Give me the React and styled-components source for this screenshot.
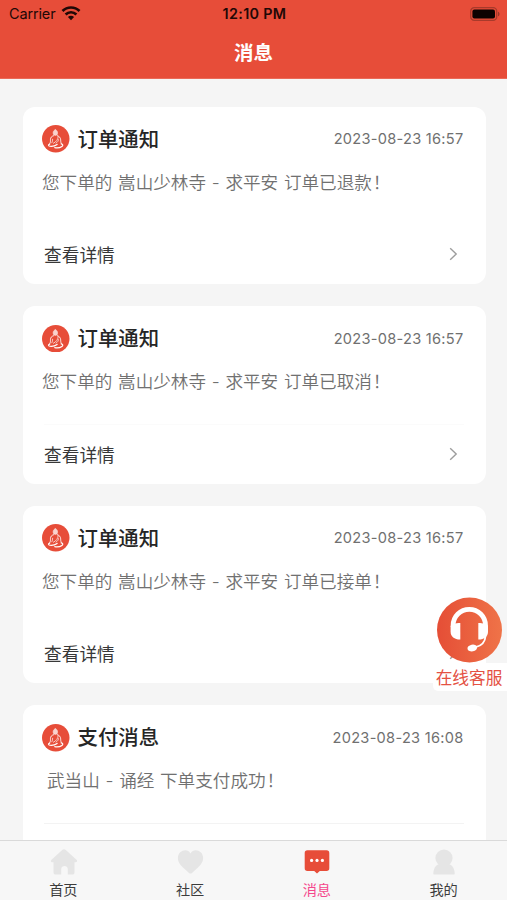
import styled, { createGlobalStyle } from 'styled-components'

const RED = '#e74d39'

const GlobalStyle = createGlobalStyle`
  * { box-sizing: border-box; }
  body {
    margin: 0;
    background: #f5f5f5;
    font-family: Inter, 'Noto Sans CJK SC', sans-serif;
  }
`

const Screen = styled.div`
  position: relative;
  width: 507px;
  height: 900px;
  display: flex;
  flex-direction: column;
  overflow: hidden;
  background: #f5f5f5;
`

const Header = styled.header`
  flex: none;
  height: 79px;
  background: ${RED};
  border-bottom: 1px solid #ea6a58;
`

const StatusBar = styled.div`
  height: 27px;
  padding: 0 7px 0 9px;
  display: grid;
  grid-template-columns: 1fr auto 1fr;
  align-items: center;
  color: #210806;
  font-size: 14.5px;
`

const Carrier = styled.div`
  display: flex;
  align-items: center;
  gap: 6px;
  letter-spacing: -0.15px;
`

const Clock = styled.div`
  font-weight: 600;
  font-size: 14.3px;
  letter-spacing: 0.35px;
`

const Battery = styled.div`
  display: flex;
  justify-content: flex-end;
`

const NavTitle = styled.h1`
  margin: 0;
  height: 51px;
  line-height: 52px;
  text-align: center;
  color: #fff;
  font-size: 19.5px;
  font-weight: 700;
`

const List = styled.main`
  flex: 1;
  min-height: 0;
  overflow: hidden;
  padding: 27.5px 21.5px 0 22.5px;
  display: flex;
  flex-direction: column;
  gap: 22px;
`

const Card = styled.article`
  flex: none;
  height: 177.6px;
  padding: 17px 22px 0 19.5px;
  border-radius: 12px;
  background: #fff;
`

const CardHead = styled.div`
  height: 31px;
  display: flex;
  align-items: center;
`

const CardTitle = styled.h2`
  flex: 1;
  margin: 0 0 0 8px;
  padding-top: 1px;
  font-size: 20.4px;
  line-height: 30px;
  font-weight: 500;
  color: #262626;
`

const Time = styled.time`
  padding-top: 0.5px;
  font-size: 14.6px;
  letter-spacing: 0.27px;
  color: #707070;
`

const Message = styled.p`
  margin: 0;
  height: 69.5px;
  padding: 14px 0 0 ${p => (p.$indent ? 5 : 0)}px;
  font-size: 17.6px;
  line-height: 27px;
  font-weight: 350;
  word-spacing: 0.75px;
  white-space: nowrap;
  color: #707070;
`

const Mark = styled.span`
  margin-left: 1px;
`

const Detail = styled.div`
  height: 60px;
  margin-left: 2px;
  padding: 0 6px 1px 0;
  border-top: 1px solid ${p => p.$line || 'transparent'};
  display: flex;
  align-items: center;
  justify-content: space-between;
  font-size: 17.7px;
  color: #383838;
`

const Support = styled.aside`
  position: absolute;
  right: 0;
  top: 597px;
  width: 74px;
  display: flex;
  flex-direction: column;
  align-items: center;
`

const SupportLabel = styled.div`
  width: 100%;
  height: 28px;
  border-radius: 5px 0 0 5px;
  background: #fff;
  color: #e45143;
  font-size: 16.7px;
  line-height: 30px;
  text-align: center;
  white-space: nowrap;
  padding-right: 2px;
`

const TabBar = styled.nav`
  flex: none;
  height: 60px;
  display: grid;
  grid-template-columns: repeat(4, 1fr);
  border-top: 1px solid #dadada;
  background: #f7f7f7;
`

const Tab = styled.div`
  padding-top: 7px;
  display: flex;
  flex-direction: column;
  align-items: center;
  font-size: 14.2px;
  line-height: 20px;
  gap: 4px;
  color: ${p => (p.$active ? '#f5468c' : '#3c3c3c')};
`

const messages = [
  { title: '订单通知', time: '2023-08-23 16:57', text: '您下单的 嵩山少林寺 - 求平安 订单已退款', detail: '查看详情' },
  { title: '订单通知', time: '2023-08-23 16:57', text: '您下单的 嵩山少林寺 - 求平安 订单已取消', detail: '查看详情', line: '#fbfbfb' },
  { title: '订单通知', time: '2023-08-23 16:57', text: '您下单的 嵩山少林寺 - 求平安 订单已接单', detail: '查看详情' },
  { title: '支付消息', time: '2023-08-23 16:08', text: '武当山 - 诵经 下单支付成功', indent: true, line: '#f3f3f3' },
]

function WifiIcon() {
  return (
    <svg width="20" height="15" viewBox="0 0 20 15" fill="none" stroke="#210806" strokeWidth="2.7">
      <path d="M1.5 5C6.2.3 13.8.3 18.5 5" />
      <path d="M4.6 8.5c3-3 7.8-3 10.8 0" />
      <path d="M10 14.2 6.9 11.1c1.8-1.7 4.4-1.7 6.2 0z" fill="#210806" stroke="none" />
    </svg>
  )
}

function BatteryIcon() {
  return (
    <svg width="30" height="14" viewBox="0 0 30 14">
      <rect x="0.7" y="0.7" width="26" height="12.6" rx="3.6" fill="none" stroke="#a83a2b" strokeWidth="1.3" />
      <rect x="2.4" y="2.4" width="22.6" height="9.2" rx="2" fill="#0c0201" />
      <path d="M28 4.7c2 .7 2 3.9 0 4.6z" fill="#98372a" />
    </svg>
  )
}

function BuddhaIcon() {
  return (
    <svg width="27.5" height="27.5" viewBox="0 0 28 28">
      <circle cx="14" cy="14" r="14" fill={RED} />
      <g fill="none" stroke="#fff" strokeLinecap="round" strokeLinejoin="round">
        <path d="M11.4 7c.3-1 1-1.1 1.4-2 .4-.5 1.2-.5 1.6 0 .4.9 1.1 1 1.4 2v2c-.3 2.2-4.1 2.2-4.4 0z" fill="#fff" fillOpacity=".75" strokeWidth=".4" />
        <path d="M11.8 10.9c-2.2.6-3.1 1.9-3.2 4 0 1.5.2 2.6-.6 4M15.6 10.9c2.3.7 3.2 2 3.4 4.2.1 1.4 0 2.4.6 3.6" strokeWidth=".9" />
        <path d="M16.5 12c-.4 3-1.8 5-4.9 6.6M10.8 14.5c0 1.6-.2 2.6-.8 3.6M16.8 15c-.1 1.4-1 2.5-2.5 3.4" strokeWidth=".7" />
        <path d="M7.8 19.5c-1.6.4-1.6 1.8.2 2.1 2.8.4 5.3-.3 7.4-1.8M13 23.1c2.7.5 5.3.1 7.3-1.3 1.4-1 1-2.5-.8-2.6" strokeWidth="1.2" />
      </g>
    </svg>
  )
}

function ArrowIcon() {
  return (
    <svg width="9" height="14" viewBox="0 0 9 14" fill="none" stroke="#9d9d9d" strokeWidth="1.4">
      <path d="m1.2 1.2 6 5.8-6 5.8" />
    </svg>
  )
}

function HeadsetIcon() {
  return (
    <svg width="66" height="66" viewBox="0.5 0 66 66">
      <defs>
        <linearGradient id="support" x1="0" y1="0.5" x2="1" y2="0.5">
          <stop offset="0" stopColor="#e54e36" />
          <stop offset="1" stopColor="#ef7348" />
        </linearGradient>
      </defs>
      <circle cx="33" cy="33" r="32.5" fill="url(#support)" />
      <path d="M16.6 30V28.5a16.2 16.2 0 0 1 32.4 0V30" fill="none" stroke="#fff" strokeWidth="4.8" />
      <path d="M23.8 26v16.5c-5.8.1-9.7-3-9.7-7.8v-5c0-2.7 5.2-3.7 9.7-3.7z" fill="#fff" />
      <path d="M41.8 26v16.5c5.8.1 9.7-3 9.7-7.8v-5c0-2.7-5.2-3.7-9.7-3.7z" fill="#fff" />
      <path d="M49 39c-.3 6-3.7 9.7-9.9 11.2" fill="none" stroke="#fff" strokeWidth="1.8" />
      <ellipse cx="35.8" cy="51" rx="4.9" ry="3.4" fill="#fff" transform="rotate(-12 35.8 51)" />
    </svg>
  )
}

function HomeIcon() {
  return (
    <svg width="28" height="28" viewBox="-2 -0.5 28 28" fill="#e5e5e5">
      <path d="M11.2 1.6c1.1-1 2.5-1 3.6 0l10.7 9.6c1.2 1.1.6 2.6-.9 2.6h-1.1v10c0 1.5-.8 2.3-2.3 2.3h-4.4v-5.4c0-4.2-6.6-4.2-6.6 0v5.4H4.8c-1.5 0-2.3-.8-2.3-2.3v-10H1.4c-1.5 0-2.1-1.5-.9-2.6z" />
    </svg>
  )
}

function HeartIcon() {
  return (
    <svg width="28" height="28" viewBox="-0.5 0 28 28" fill="#e5e5e5">
      <path d="M14 5.4C17-.2 26.6 2.3 26.6 10c0 4.4-2.7 7.3-5.4 9.8l-5.7 5.1c-1 .9-2 .9-3 0l-5.7-5.1C4.1 17.3 1.4 14.4 1.4 10 1.4 2.3 11 -.2 14 5.4z" />
    </svg>
  )
}

function ChatIcon() {
  return (
    <svg width="28" height="28" viewBox="0 0 28 28">
      <path d="M4.4 2.3h19.2c1.8 0 2.7.9 2.7 2.7v15.2c0 1.8-.9 2.7-2.7 2.7h-6.8L14 25.6l-2.8-2.7H4.4c-1.8 0-2.7-.9-2.7-2.7V5c0-1.8.9-2.7 2.7-2.7z" fill={RED} />
      <g fill="#fff">
        <circle cx="8.6" cy="12.4" r="1.6" />
        <circle cx="14" cy="12.4" r="1.6" />
        <circle cx="19.4" cy="12.4" r="1.6" />
      </g>
    </svg>
  )
}

function UserIcon() {
  return (
    <svg width="28" height="28" viewBox="0 0 28 28" fill="#e5e5e5">
      <circle cx="14" cy="10" r="8.6" />
      <path d="M8.5 16.3h11c3 1.2 5 4.7 5.2 9 0 .8-.3 1.2-1.1 1.2H4.4c-.8 0-1.1-.4-1.1-1.2.2-4.3 2.2-7.8 5.2-9z" />
    </svg>
  )
}

const tabs = [
  { label: '首页', Icon: HomeIcon },
  { label: '社区', Icon: HeartIcon },
  { label: '消息', Icon: ChatIcon, active: true },
  { label: '我的', Icon: UserIcon },
]

export default function App() {
  return (
    <>
      <GlobalStyle />
      <Screen>
        <Header>
          <StatusBar>
            <Carrier>Carrier <WifiIcon /></Carrier>
            <Clock>12:10 PM</Clock>
            <Battery><BatteryIcon /></Battery>
          </StatusBar>
          <NavTitle>消息</NavTitle>
        </Header>

        <List>
          {messages.map((m, i) => (
            <Card key={i}>
              <CardHead>
                <BuddhaIcon />
                <CardTitle>{m.title}</CardTitle>
                <Time>{m.time}</Time>
              </CardHead>
              <Message $indent={m.indent}>{m.text}<Mark>！</Mark></Message>
              <Detail $line={m.line}>
                {m.detail}
                {m.detail && <ArrowIcon />}
              </Detail>
            </Card>
          ))}
        </List>

        <TabBar>
          {tabs.map(({ label, Icon, active }) => (
            <Tab key={label} $active={active}>
              <Icon />
              {label}
            </Tab>
          ))}
        </TabBar>

        <Support>
          <HeadsetIcon />
          <SupportLabel>在线客服</SupportLabel>
        </Support>
      </Screen>
    </>
  )
}
